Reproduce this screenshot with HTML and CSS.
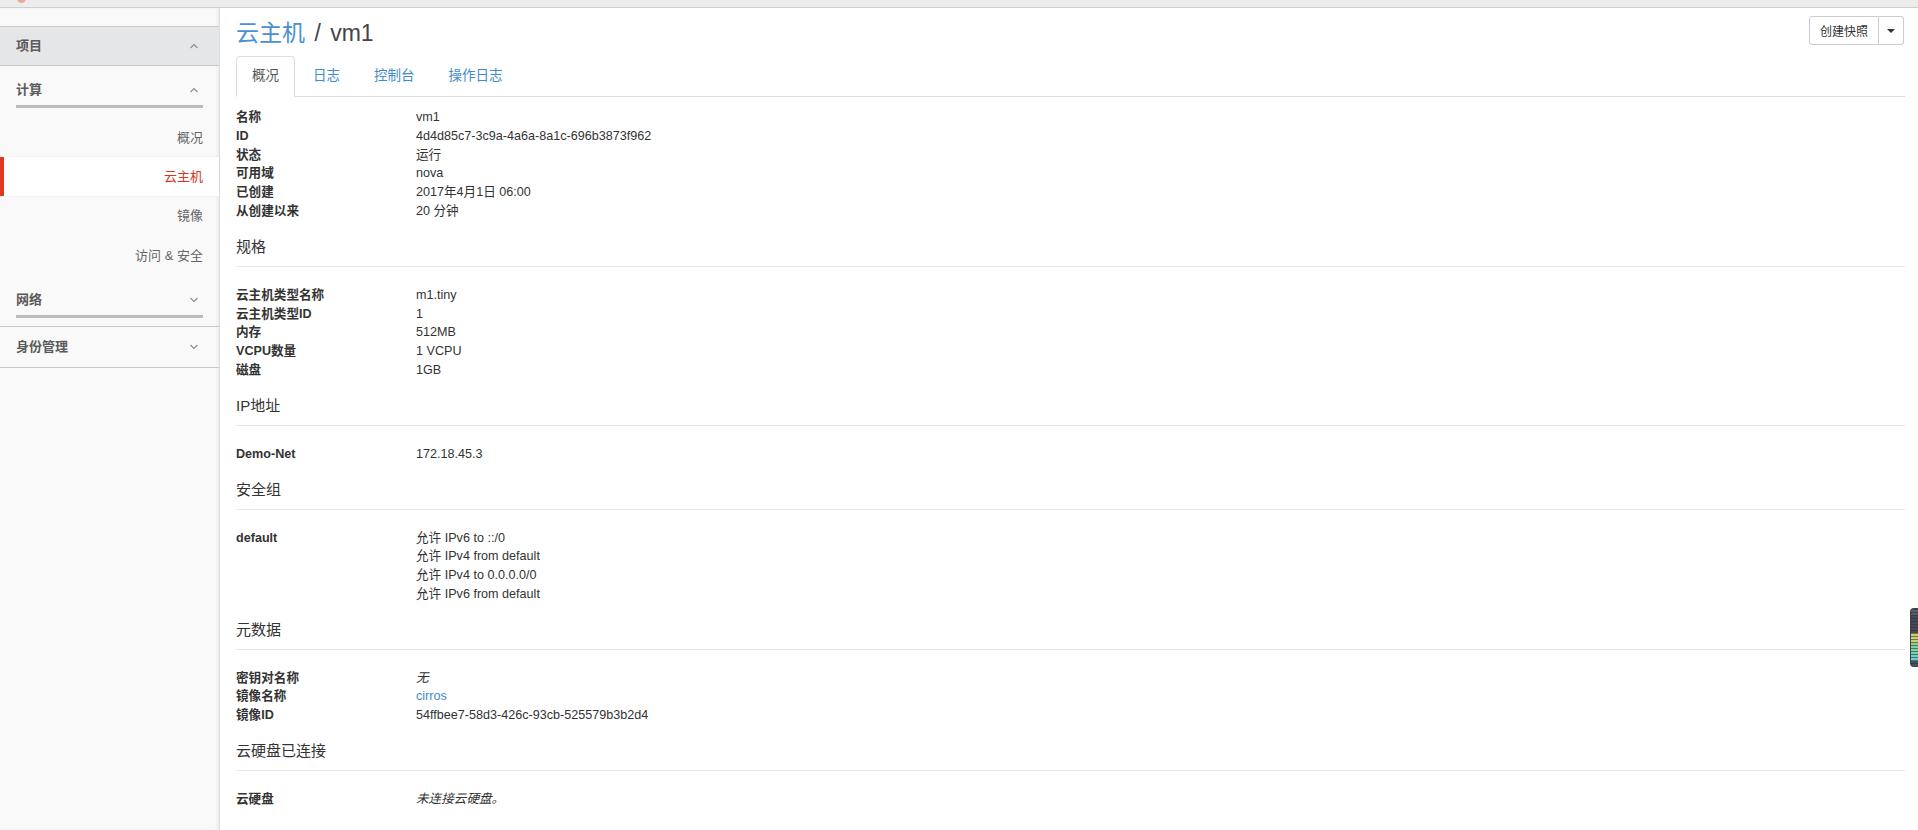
FILE: index.html
```html
<!DOCTYPE html>
<html lang="zh-CN">
<head>
<meta charset="utf-8">
<title>云主机 / vm1</title>
<link rel="stylesheet" href="styles.css">
</head>
<body>
<div class="topbar"><span class="logo-mark"></span></div>
<div class="layout">
  <aside class="sidebar">
    <div class="side-head side-head--dark">
      <span>项目</span>
      <svg class="chev" width="8" height="6" viewBox="0 0 8 6"><polyline points="0.5,5 4,1.5 7.5,5" fill="none" stroke="#8a8a8a" stroke-width="1.1"/></svg>
    </div>
    <div class="side-group">
      <div class="side-head side-head--open">
        <span>计算</span>
        <svg class="chev" width="8" height="6" viewBox="0 0 8 6"><polyline points="0.5,5 4,1.5 7.5,5" fill="none" stroke="#8a8a8a" stroke-width="1.1"/></svg>
      </div>
      <ul class="side-list">
        <li class="side-item">概况</li>
        <li class="side-item side-item--active">云主机</li>
        <li class="side-item">镜像</li>
        <li class="side-item">访问 &amp; 安全</li>
      </ul>
    </div>
    <div class="side-head side-head--open side-head--border side-head--low">
      <span>网络</span>
      <svg class="chev" width="8" height="6" viewBox="0 0 8 6"><polyline points="0.5,1 4,4.5 7.5,1" fill="none" stroke="#8a8a8a" stroke-width="1.1"/></svg>
    </div>
    <div class="side-head side-head--border">
      <span>身份管理</span>
      <svg class="chev" width="8" height="6" viewBox="0 0 8 6"><polyline points="0.5,1 4,4.5 7.5,1" fill="none" stroke="#8a8a8a" stroke-width="1.1"/></svg>
    </div>
  </aside>

  <main class="main">
    <div class="page-head">
      <h1 class="page-title"><a class="crumb" href="#">云主机</a> <span class="sep">/</span> vm1</h1>
      <div class="btn-group">
        <button class="btn">创建快照</button>
        <button class="btn btn-caret"><span class="caret"></span></button>
      </div>
    </div>

    <ul class="tabs">
      <li class="tab tab--active">概况</li>
      <li class="tab">日志</li>
      <li class="tab">控制台</li>
      <li class="tab">操作日志</li>
    </ul>

    <dl class="info info--first">
      <dt>名称</dt><dd>vm1</dd>
      <dt>ID</dt><dd>4d4d85c7-3c9a-4a6a-8a1c-696b3873f962</dd>
      <dt>状态</dt><dd>运行</dd>
      <dt>可用域</dt><dd>nova</dd>
      <dt>已创建</dt><dd>2017年4月1日 06:00</dd>
      <dt>从创建以来</dt><dd>20 分钟</dd>
    </dl>

    <h4 class="section">规格</h4>
    <dl class="info">
      <dt>云主机类型名称</dt><dd>m1.tiny</dd>
      <dt>云主机类型ID</dt><dd>1</dd>
      <dt>内存</dt><dd>512MB</dd>
      <dt>VCPU数量</dt><dd>1 VCPU</dd>
      <dt>磁盘</dt><dd>1GB</dd>
    </dl>

    <h4 class="section">IP地址</h4>
    <dl class="info">
      <dt>Demo-Net</dt><dd>172.18.45.3</dd>
    </dl>

    <h4 class="section">安全组</h4>
    <dl class="info">
      <dt>default</dt>
      <dd>
        <div>允许 IPv6 to ::/0</div>
        <div>允许 IPv4 from default</div>
        <div>允许 IPv4 to 0.0.0.0/0</div>
        <div>允许 IPv6 from default</div>
      </dd>
    </dl>

    <h4 class="section">元数据</h4>
    <dl class="info">
      <dt>密钥对名称</dt><dd><em>无</em></dd>
      <dt>镜像名称</dt><dd><a class="link" href="#">cirros</a></dd>
      <dt>镜像ID</dt><dd>54ffbee7-58d3-426c-93cb-525579b3b2d4</dd>
    </dl>

    <h4 class="section">云硬盘已连接</h4>
    <dl class="info">
      <dt>云硬盘</dt><dd><em>未连接云硬盘。</em></dd>
    </dl>
  </main>
</div>
<div class="widget"></div>
</body>
</html>
```

FILE: styles.css
```css
* { box-sizing: border-box; }

html, body {
  margin: 0;
  padding: 0;
  background: #ffffff;
  overflow: hidden;
}

body {
  font-family: "Liberation Sans", Arial, "Noto Sans CJK SC", sans-serif;
  color: #333333;
  font-size: 12.6px;
  height: 830px;
}

/* top bar */
.topbar {
  position: relative;
  height: 8px;
  background: #ececec;
  border-bottom: 1px solid #cfcfcf;
  overflow: hidden;
}

.logo-mark {
  position: absolute;
  left: 17px;
  top: -6px;
  width: 9px;
  height: 9px;
  border-radius: 50%;
  background: #eaa99c;
}

.layout {
  display: flex;
  height: 822px;
}

/* sidebar */
.sidebar {
  width: 220px;
  flex: 0 0 220px;
  background: #f9f9f9;
  border-right: 1px solid #dedede;
  box-shadow: inset -2px 0 3px rgba(0, 0, 0, 0.05);
  padding-top: 18px;
  color: #5a5a5a;
  font-size: 13px;
}

.side-head {
  display: flex;
  justify-content: space-between;
  align-items: center;
  padding: 0 21px 0 16px;
  height: 40px;
  font-weight: bold;
  line-height: 20px;
}

.side-head--dark {
  background: #e5e6e8;
  border-top: 1px solid #c9c9c9;
  border-bottom: 1px solid #c9c9c9;
}

.side-head--open {
  display: block;
  height: auto;
  padding: 14px 16px 10px 16px;
}

.side-head--low {
  padding-top: 16px;
  padding-bottom: 8px;
}

.side-head--open > span {
  display: inline-block;
}

.side-head--open .chev {
  float: right;
  margin: 7px 5px 0 0;
}

.side-head--open::after {
  content: "";
  display: block;
  height: 3px;
  margin-top: 5px;
  background: #bcbcbc;
  clear: both;
}

.side-head--border {
  border-bottom: 1px solid #c9c9c9;
}

.side-head:not(.side-head--open).side-head--border {
  height: 41px;
}

.chev {
  display: block;
}

.side-list {
  list-style: none;
  margin: 0;
  padding: 0;
}

.side-item {
  height: 39px;
  line-height: 39px;
  text-align: right;
  padding-right: 16px;
  color: #666666;
}

.side-item:nth-child(4) {
  line-height: 41px;
}

.side-item--active {
  background: #ffffff;
  color: #d6361c;
  border-left: 4px solid #e0391d;
  box-shadow: 0 0 2px rgba(0, 0, 0, 0.08);
}

/* main */
.main {
  flex: 1;
  padding: 0 13px 0 16px;
  min-width: 0;
}

.page-head {
  display: flex;
  justify-content: space-between;
  align-items: flex-start;
}

.page-title {
  margin: 10px 0 8px 0;
  font-size: 23px;
  line-height: 30px;
  font-weight: normal;
  color: #444444;
}

.crumb {
  color: #4a8fd1;
  text-decoration: none;
}

.sep {
  color: #444444;
  margin: 0 3px;
}

.btn-group {
  display: flex;
  margin-top: 8px;
  margin-right: 1px;
}

.btn {
  height: 29px;
  border: 1px solid #cccccc;
  background: #ffffff;
  color: #333333;
  font-family: inherit;
  font-size: 12px;
  padding: 0 10px;
  border-radius: 3px 0 0 3px;
  cursor: pointer;
}

.btn-caret {
  width: 25px;
  padding: 0;
  border-left: 0;
  border-radius: 0 3px 3px 0;
  display: flex;
  align-items: center;
  justify-content: center;
}

.caret {
  display: block;
  width: 0;
  height: 0;
  border-top: 4px solid #333333;
  border-left: 4px solid transparent;
  border-right: 4px solid transparent;
}

/* tabs */
.tabs {
  display: flex;
  list-style: none;
  margin: 0;
  padding: 0;
  border-bottom: 1px solid #dddddd;
  font-size: 13.5px;
}

.tab {
  margin: 0 2px -1px 0;
  padding: 9px 15px 10px;
  line-height: 20px;
  border: 1px solid transparent;
  border-radius: 4px 4px 0 0;
  color: #428bca;
}

.tab--active {
  color: #555555;
  background: #ffffff;
  border-color: #dddddd #dddddd transparent;
}

/* detail lists */
.info {
  display: grid;
  grid-template-columns: 180px 1fr;
  margin: 18.6px 0 0;
  line-height: 18.8px;
}

.info--first {
  margin-top: 11px;
}

.info dt {
  font-weight: bold;
  color: #333333;
}

.info dd {
  margin: 0;
  color: #333333;
}

.info em {
  font-style: italic;
}

.link {
  color: #428bca;
  text-decoration: none;
}

.section {
  margin: 16.4px 0 0;
  padding-bottom: 9px;
  border-bottom: 1px solid #e7e7e7;
  font-size: 15px;
  line-height: 20px;
  font-weight: normal;
  color: #333333;
}

/* floating widget at the right edge */
.widget {
  position: absolute;
  left: 1910px;
  top: 608px;
  width: 8px;
  height: 59px;
  border-radius: 4px 0 0 4px;
  border: 1px solid #3c4048;
  border-right: 0;
  background:
    repeating-linear-gradient(to bottom, rgba(40, 43, 50, 0.55) 0 1px, transparent 1px 3px),
    linear-gradient(to bottom, #5a5f6a 0 6px, #454a54 6px 24px, #c9cf6c 24px 34px, #7fd39a 34px 44px, #62d3cc 44px 52px, #4a4f59 52px);
}
```
